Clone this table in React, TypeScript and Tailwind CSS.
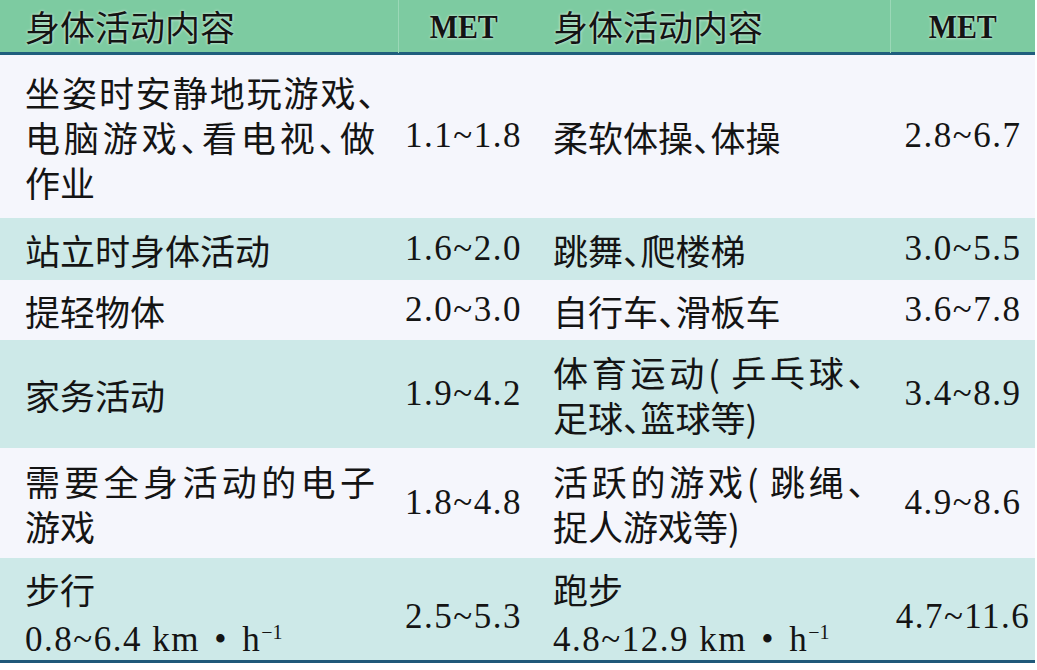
import type { ReactNode } from "react"

type Row = {
  bg: string
  h: string
  pad?: string
  left: ReactNode[]
  leftMet: string
  right: ReactNode[]
  rightMet: string
}

const cjk = "[font-family:'Noto_Sans_CJK_SC','Noto_Sans',sans-serif] [font-feature-settings:'halt']"
const serif = "[font-family:'Liberation_Serif','Times_New_Roman',serif] [font-feature-settings:normal]"
const justify = "text-justify [text-align-last:justify]"

function Speed({ value }: { value: string }) {
  return (
    <span className={`${serif} text-[35px] tracking-[1.5px]`}>
      {value} km <span className="mx-[4px]">•</span> h
      <span className="inline-block -translate-y-[12px] text-[20px] tracking-normal">−1</span>
    </span>
  )
}

const rows: Row[] = [
  {
    bg: "bg-[#f5f6fc]",
    h: "h-[163px]",
    left: [
      <div className={justify}>坐姿时安静地玩游戏、</div>,
      <div className={justify}>电脑游戏、看电视、做</div>,
      <div>作业</div>,
    ],
    leftMet: "1.1~1.8",
    right: [<div>柔软体操、体操</div>],
    rightMet: "2.8~6.7",
  },
  {
    bg: "bg-[#cde9e8]",
    h: "h-[62px]",
    left: [<div>站立时身体活动</div>],
    leftMet: "1.6~2.0",
    right: [<div>跳舞、爬楼梯</div>],
    rightMet: "3.0~5.5",
  },
  {
    bg: "bg-[#f5f6fc]",
    h: "h-[60px]",
    left: [<div>提轻物体</div>],
    leftMet: "2.0~3.0",
    right: [<div>自行车、滑板车</div>],
    rightMet: "3.6~7.8",
  },
  {
    bg: "bg-[#cde9e8]",
    h: "h-[108px]",
    left: [<div>家务活动</div>],
    leftMet: "1.9~4.2",
    right: [<div className={justify}>体育运动( 乒乓球、</div>, <div>足球、篮球等)</div>],
    rightMet: "3.4~8.9",
  },
  {
    bg: "bg-[#f5f6fc]",
    h: "h-[110px]",
    left: [<div className={justify}>需要全身活动的电子</div>, <div>游戏</div>],
    leftMet: "1.8~4.8",
    right: [<div className={justify}>活跃的游戏( 跳绳、</div>, <div>捉人游戏等)</div>],
    rightMet: "4.9~8.6",
  },
  {
    bg: "bg-[#cde9e8]",
    h: "h-[105px]",
    pad: "pt-[8px]",
    left: [
      <div className="leading-[46px]">步行</div>,
      <div className="leading-[48px]">
        <Speed value="0.8~6.4" />
      </div>,
    ],
    leftMet: "2.5~5.3",
    right: [
      <div className="leading-[46px]">跑步</div>,
      <div className="leading-[48px]">
        <Speed value="4.8~12.9" />
      </div>,
    ],
    rightMet: "4.7~11.6",
  },
]

function Met({ value }: { value: string }) {
  return <span className={`${serif} text-[35px] tracking-[1.5px]`}>{value}</span>
}

export default function App() {
  return (
    <div className="min-h-screen w-full bg-white">
      <div className={`w-[1035px] ${cjk} text-[35px] text-[#141414]`}>
        <div className="grid h-[55px] grid-cols-[399px_129px_363px_144px] border-b-[3px] border-[#1f5e7d] bg-[#7dcba1] [text-shadow:0_0_3px_rgba(255,255,255,0.85)]">
          <div className="flex items-center border-r border-[#9bd8b7] pl-[25px]">身体活动内容</div>
          <div className="flex items-center justify-center">
            <span className={`${serif} inline-block scale-x-[0.88] text-[34px] font-bold`}>MET</span>
          </div>
          <div className="flex items-center border-r border-[#9bd8b7] pl-[25px]">身体活动内容</div>
          <div className="flex items-center justify-center">
            <span className={`${serif} inline-block scale-x-[0.88] text-[34px] font-bold`}>MET</span>
          </div>
        </div>

        {rows.map((row, idx) => (
          <div
            key={idx}
            className={`grid grid-cols-[399px_129px_363px_144px] ${row.h} ${row.bg} ${
              idx === rows.length - 1 ? "border-b-[3px] border-[#1f5a7a]" : ""
            }`}
          >
            <div className={`flex flex-col justify-center pl-[25px] pr-[24px] leading-[45px] ${row.pad ?? ""}`}>
              {row.left.map((line, i) => (
                <div key={i}>{line}</div>
              ))}
            </div>
            <div className={`flex items-center justify-center ${row.pad ?? ""}`}>
              <Met value={row.leftMet} />
            </div>
            <div className={`flex flex-col justify-center pl-[25px] pr-[26px] leading-[45px] ${row.pad ?? ""}`}>
              {row.right.map((line, i) => (
                <div key={i}>{line}</div>
              ))}
            </div>
            <div className={`flex items-center justify-center ${row.pad ?? ""}`}>
              <Met value={row.rightMet} />
            </div>
          </div>
        ))}
      </div>
    </div>
  )
}
